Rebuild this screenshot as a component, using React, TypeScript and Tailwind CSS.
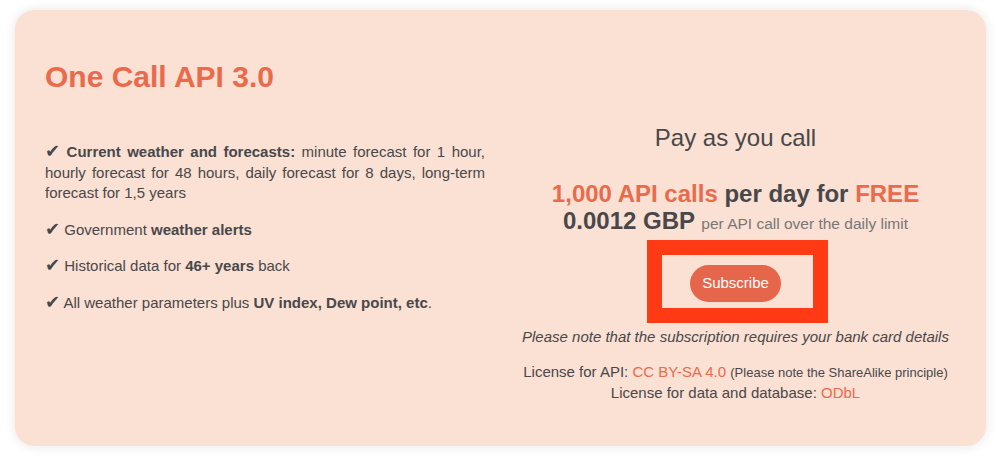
import type { ReactNode } from 'react'

const features: ReactNode[] = [
  <>
    <b>Current weather and forecasts:</b> minute forecast for 1 hour, hourly forecast for 48 hours, daily
    forecast for 8 days, long-term forecast for 1,5 years
  </>,
  <>
    Government <b>weather alerts</b>
  </>,
  <>
    Historical data for <b>46+ years</b> back
  </>,
  <>
    All weather parameters plus <b>UV index, Dew point, etc</b>.
  </>,
]

export default function App() {
  return (
    <div className="h-[458px] w-[1001px] bg-white px-[15px] pt-[10px] font-['Liberation_Sans',Arial,sans-serif] text-[#48484a]">
      <div className="flex h-[436px] rounded-[20px] bg-[#fbe0d4] pl-[30px] shadow-[0_0_12px_rgba(0,0,0,0.1)]">
        {/* left: title + features */}
        <div className="w-[440px] pt-[49px]">
          <h2 className="text-[30px] font-bold leading-[36px] text-[#e96b4c]">One Call API 3.0</h2>
          <div className="mt-[47px] flex flex-col gap-[16px] text-[15px] leading-[20.5px]">
            {features.map((item, i) => (
              <p key={i} className="text-justify">
                <span className="font-['DejaVu_Sans',sans-serif] text-[18px] leading-none">✔</span> {item}
              </p>
            ))}
          </div>
        </div>

        {/* right: pricing */}
        <div className="flex flex-1 flex-col items-center pt-[114px] text-center">
          <div className="text-[24px] leading-[28px]">Pay as you call</div>

          <div className="mt-[28px] text-[24px] leading-[27px] font-bold">
            <div>
              <span className="text-[#e96b4c]">1,000 API calls</span> per day for{' '}
              <span className="text-[#e96b4c]">FREE</span>
            </div>
            <div>
              0.0012 GBP{' '}
              <span className="text-[15.5px] leading-none font-normal text-[#777777]">
                per API call over the daily limit
              </span>
            </div>
          </div>

          <div className="relative mt-[31px]">
            <div className="absolute -left-[43px] -top-[25px] h-[83px] w-[181px] border-[15px] border-[#ff3a14]" />
            <button
              type="button"
              className="relative h-[37px] rounded-full bg-[#e5664a] px-[12px] text-[15px] text-white"
            >
              Subscribe
            </button>
          </div>

          <p className="mt-[24px] text-[15px] leading-[21px] italic">
            Please note that the subscription requires your bank card details
          </p>

          <div className="mt-[14px] text-[15px] leading-[21px]">
            <div>
              License for API: <span className="text-[#e96b4c]">CC BY-SA 4.0</span>{' '}
              <span className="text-[13px] leading-none">(Please note the ShareAlike principle)</span>
            </div>
            <div>
              License for data and database: <span className="text-[#e96b4c]">ODbL</span>
            </div>
          </div>
        </div>
      </div>
    </div>
  )
}
